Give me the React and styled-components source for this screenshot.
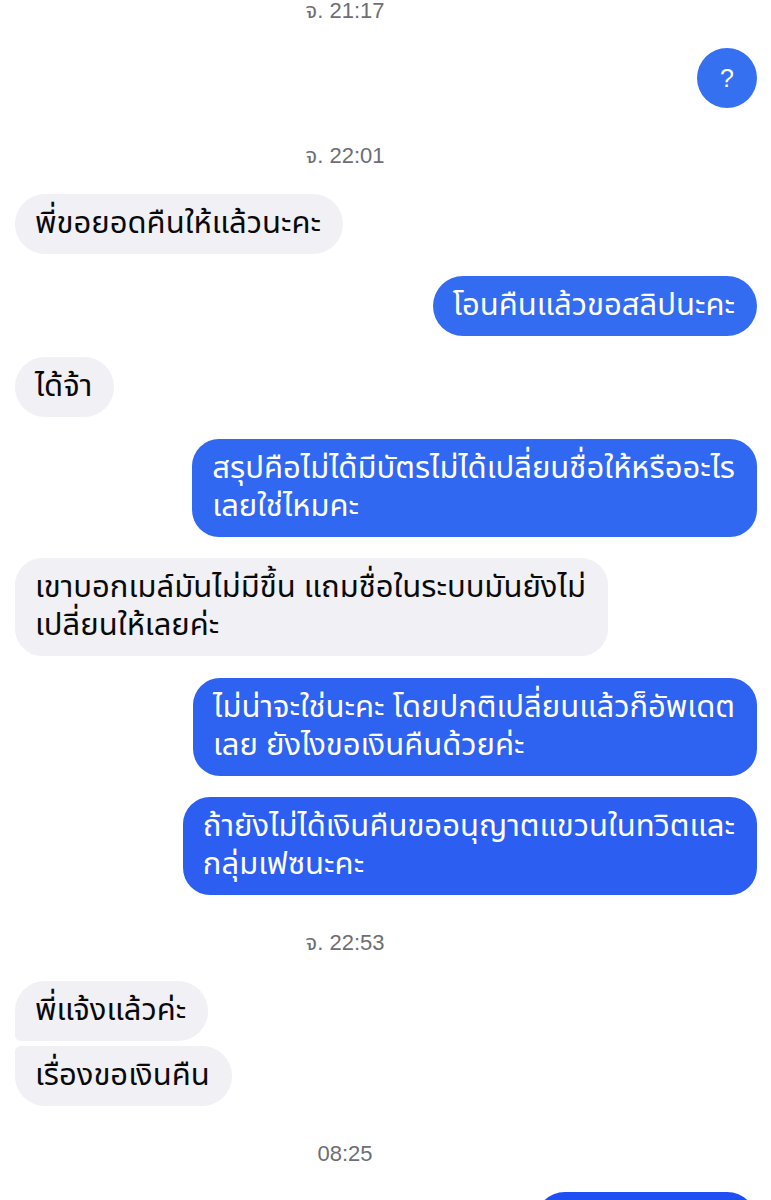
import React from "react";
import styled, { createGlobalStyle, css } from "styled-components";

const Global = createGlobalStyle`
  html, body { margin: 0; padding: 0; background: #ffffff; }
  body { font-family: "Noto Sans Thai", "Noto Sans", "Liberation Sans", sans-serif; }
`;

const Chat = styled.div`
  width: 771px;
  box-sizing: border-box;
  padding: 0 14px 0 15px;
  display: flex;
  flex-direction: column;
`;

const Stamp = styled.div`
  height: 22px;
  line-height: 22px;
  margin: ${(p) => (p.$first ? "0 0 26px" : "37px 0 27px")};
  padding-right: 82px;
  text-align: center;
  font-family: "Liberation Sans", "Noto Sans Thai", sans-serif;
  font-size: 22px;
  color: #6e6e73;
`;

const Group = styled.div`
  display: flex;
  flex-direction: column;
  gap: ${(p) => p.$gap || "21.5px"};
`;

const Bubble = styled.div`
  align-self: ${(p) => (p.$me ? "flex-end" : "flex-start")};
  box-sizing: border-box;
  padding: 11px 22px 11px 20px;
  font-size: 31px;
  line-height: 38px;
  white-space: nowrap;
  border-radius: ${(p) => (p.$multi ? "27px" : "30px")};
  background: ${(p) => (p.$me ? p.$tone || "#3169f0" : "#f0f0f5")};
  color: ${(p) => (p.$me ? "#ffffff" : "#0a0a0a")};
  ${(p) =>
    p.$pos === "first" &&
    css`
      border-bottom-left-radius: 6px;
    `}
  ${(p) =>
    p.$pos === "last" &&
    css`
      border-top-left-radius: 6px;
    `}
`;

const Round = styled.div`
  align-self: flex-end;
  width: 60px;
  height: 60px;
  border-radius: 50%;
  background: #3570f1;
  color: #ffffff;
  display: flex;
  align-items: center;
  justify-content: center;
  font-family: "Liberation Sans", sans-serif;
  font-size: 25px;
`;

const Msg = ({ me, tone, pos, lines }) => (
  <Bubble $me={me} $tone={tone} $pos={pos} $multi={lines.length > 1}>
    {lines.map((l, i) => (
      <React.Fragment key={i}>
        {i > 0 && <br />}
        {l}
      </React.Fragment>
    ))}
  </Bubble>
);

export default function App() {
  return (
    <>
      <Global />
      <Chat>
        <Stamp $first>จ. 21:17</Stamp>
        <Round>?</Round>

        <Stamp>จ. 22:01</Stamp>
        <Group>
          <Msg lines={["พี่ขอยอดคืนให้แล้วนะคะ"]} />
          <Msg me tone="#336cf1" lines={["โอนคืนแล้วขอสลิปนะคะ"]} />
          <Msg lines={["ได้จ้า"]} />
          <Msg
            me
            tone="#3168f1"
            lines={["สรุปคือไม่ได้มีบัตรไม่ได้เปลี่ยนชื่อให้หรืออะไร", "เลยใช่ไหมคะ"]}
          />
          <Msg
            lines={["เขาบอกเมล์มันไม่มีขึ้น แถมชื่อในระบบมันยังไม่", "เปลี่ยนให้เลยค่ะ"]}
          />
          <Msg
            me
            tone="#2e62f1"
            lines={["ไม่น่าจะใช่นะคะ โดยปกติเปลี่ยนแล้วก็อัพเดต", "เลย ยังไงขอเงินคืนด้วยค่ะ"]}
          />
          <Msg
            me
            tone="#2c5ef1"
            lines={["ถ้ายังไม่ได้เงินคืนขออนุญาตแขวนในทวิตและ", "กลุ่มเฟซนะคะ"]}
          />
        </Group>

        <Stamp>จ. 22:53</Stamp>
        <Group $gap="5px">
          <Msg pos="first" lines={["พี่แจ้งแล้วค่ะ"]} />
          <Msg pos="last" lines={["เรื่องขอเงินคืน"]} />
        </Group>

        <Stamp>08:25</Stamp>
        <Group>
          <Msg me tone="#1f4ef2" lines={["ขอบคุณมากค่ะ"]} />
        </Group>
      </Chat>
    </>
  );
}
